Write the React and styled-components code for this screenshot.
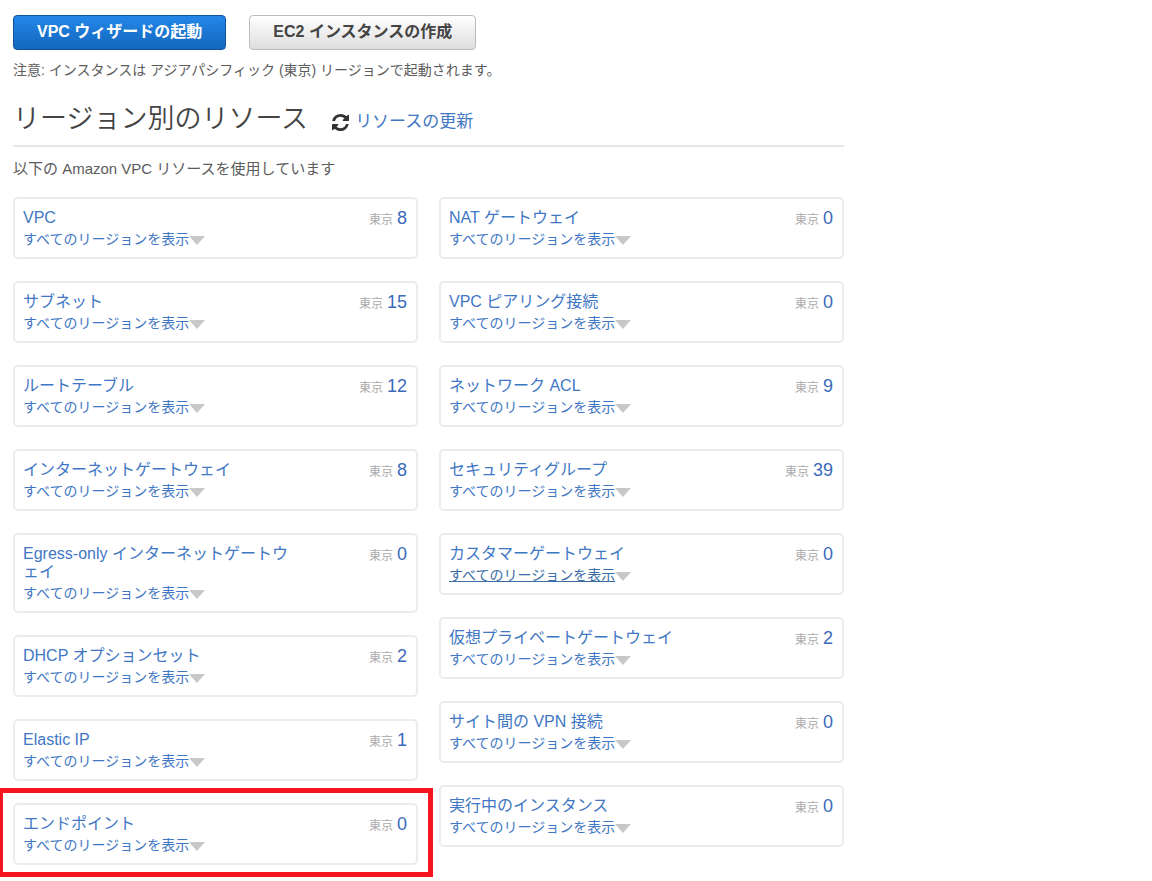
import React from 'react';
import styled, { createGlobalStyle } from 'styled-components';

const GlobalStyle = createGlobalStyle`
  body {
    margin: 0;
    background: #fff;
    color: #5c5c5c;
    font-family: 'Liberation Sans', 'Noto Sans CJK JP', sans-serif;
  }
`;

/**
 * Page
 */

const Page = styled.main`
  max-width: 831px;
  padding: 15px 13px 16px;
`;

const Actions = styled.div`
  display: flex;
  flex-wrap: wrap;
  gap: 23px;
`;

const Button = styled.button`
  height: 35px;
  padding: 0 23px 1px;
  border: 1px solid ${(props) => (props.$primary ? '#0f549c' : '#bbb')};
  border-radius: 4px;
  background: ${(props) =>
    props.$primary ? 'linear-gradient(#2387e8, #1467bd)' : 'linear-gradient(#fff, #dedede)'};
  color: ${(props) => (props.$primary ? '#fff' : '#444')};
  font-family: inherit;
  font-size: 16px;
  font-weight: bold;
  line-height: 24px;
  cursor: pointer;
`;

const Text = styled.p`
  margin: 0;
  font-size: 14px;
  line-height: 20px;
`;

const Notice = styled(Text)`
  margin-top: 10px;
`;

const Intro = styled(Text)`
  font-size: 15px;
`;

/**
 * Resource heading
 */

const Header = styled.div`
  display: flex;
  align-items: center;
  gap: 24px;
  margin: 19px 0 12px;
  padding-bottom: 6px;
  border-bottom: 2px solid #e6e6e6;
`;

const Title = styled.h1`
  margin: 0;
  color: #444;
  font-size: 27px;
  font-weight: 350;
  line-height: 40px;
`;

const Link = styled.a`
  color: #3f77c4;
  text-decoration: none;
`;

const RefreshLink = styled(Link)`
  display: flex;
  align-items: center;
  gap: 6px;
  padding-top: 6px;
  font-size: 17px;
  line-height: 24px;
`;

/**
 * Resource cards
 */

const Columns = styled.div`
  display: grid;
  grid-template-columns: 1fr 1fr;
  align-items: start;
  gap: 21px;
  margin-top: 18px;
`;

const Column = styled.div`
  display: flex;
  flex-direction: column;
  gap: 22px;
`;

const Card = styled.section`
  position: relative;
  display: flex;
  justify-content: space-between;
  box-sizing: border-box;
  min-height: 62px;
  padding: 10px 9px 8px 8px;
  border: 2px solid #ececec;
  border-radius: 5px;
`;

const Highlight = styled.div`
  position: absolute;
  inset: -17px -17px -14px;
  border: 5px solid #f8141e;
  pointer-events: none;
`;

const Names = styled.div`
  width: 70%;
`;

const Name = styled(Link)`
  display: block;
  font-size: 16px;
  line-height: 18px;
  word-break: break-all;
  line-break: anywhere;
`;

const Regions = styled.div`
  display: flex;
  align-items: center;
  margin-top: 2px;
`;

const RegionsLink = styled(Link)`
  color: ${(props) => (props.$active ? '#3b6ea5' : '#3f77c4')};
  font-size: 14px;
  line-height: 20px;
  text-decoration: ${(props) => (props.$active ? 'underline' : 'none')};
`;

const Arrow = styled.span`
  margin-top: 3px;
  border: 8px solid transparent;
  border-top: 9px solid #c8c8c8;
  border-bottom: 0;
`;

const Count = styled.div`
  display: flex;
  align-items: baseline;
  gap: 4px;
  height: 18px;
  color: #aaa;
  font-size: 12px;
  line-height: 18px;
`;

const Number = styled(Link)`
  color: #3b6aba;
  font-size: 18px;
`;

const left = [
  { name: 'VPC', count: 8 },
  { name: 'サブネット', count: 15 },
  { name: 'ルートテーブル', count: 12 },
  { name: 'インターネットゲートウェイ', count: 8 },
  { name: 'Egress-only インターネットゲートウェイ', count: 0 },
  { name: 'DHCP オプションセット', count: 2 },
  { name: 'Elastic IP', count: 1 },
  { name: 'エンドポイント', count: 0, highlight: true },
];

const right = [
  { name: 'NAT ゲートウェイ', count: 0 },
  { name: 'VPC ピアリング接続', count: 0 },
  { name: 'ネットワーク ACL', count: 9 },
  { name: 'セキュリティグループ', count: 39 },
  { name: 'カスタマーゲートウェイ', count: 0, active: true },
  { name: '仮想プライベートゲートウェイ', count: 2 },
  { name: 'サイト間の VPN 接続', count: 0 },
  { name: '実行中のインスタンス', count: 0 },
];

function RefreshIcon() {
  return (
    <svg width="17" height="17" viewBox="0 0 1536 1536" fill="#333" aria-hidden="true">
      <path d="M1511 928q0 5-1 7-64 268-268 434.500T764 1536q-146 0-282.500-55T238 1324l-129 129q-19 19-45 19t-45-19-19-45V960q0-26 19-45t45-19h448q26 0 45 19t19 45-19 45l-137 137q71 66 161 102t187 36q134 0 250-65t186-179q11-17 53-117 8-23 30-23h192q13 0 22.500 9.500t9.500 22.500zm25-800v448q0 26-19 45t-45 19h-448q-26 0-45-19t-19-45 19-45l138-138Q969 256 768 256q-134 0-250 65T332 500q-11 17-53 117-8 23-30 23H50q-13 0-22.500-9.500T18 608v-7q65-268 270-434.500T768 0q146 0 284 55.500T1297 212l130-129q19-19 45-19t45 19 19 45z" />
    </svg>
  );
}

function Resource({ name, count, active, highlight }) {
  return (
    <Card>
      <Names>
        <Name href="#">{name}</Name>
        <Regions>
          <RegionsLink href="#" $active={active}>
            すべてのリージョンを表示
          </RegionsLink>
          <Arrow />
        </Regions>
      </Names>
      <Count>
        東京 <Number href="#">{count}</Number>
      </Count>
      {highlight && <Highlight />}
    </Card>
  );
}

function App() {
  return (
    <>
      <GlobalStyle />
      <Page lang="ja">
        <Actions>
          <Button $primary>VPC ウィザードの起動</Button>
          <Button>EC2 インスタンスの作成</Button>
        </Actions>
        <Notice>注意: インスタンスは アジアパシフィック (東京) リージョンで起動されます。</Notice>
        <Header>
          <Title>リージョン別のリソース</Title>
          <RefreshLink href="#">
            <RefreshIcon />
            リソースの更新
          </RefreshLink>
        </Header>
        <Intro>以下の Amazon VPC リソースを使用しています</Intro>
        <Columns>
          <Column>
            {left.map((item) => (
              <Resource key={item.name} {...item} />
            ))}
          </Column>
          <Column>
            {right.map((item) => (
              <Resource key={item.name} {...item} />
            ))}
          </Column>
        </Columns>
      </Page>
    </>
  );
}

export default App;
